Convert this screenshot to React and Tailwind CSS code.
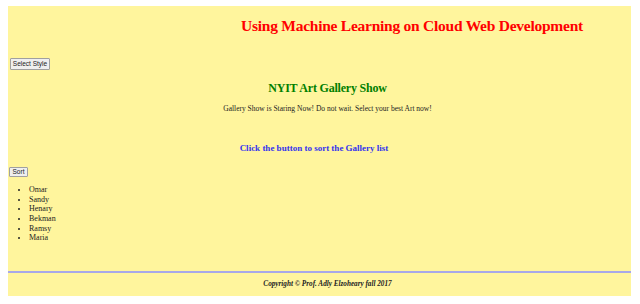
export default function App() {
  return (
    <div className="w-[640px] h-[304px] bg-white pt-[6px] pl-2 leading-none" style={{ fontFamily: '"Liberation Serif", "Times New Roman", serif' }}>
      <div className="w-[623px] h-[290px] bg-[#fff59d] flex flex-col">
        <h1 className="ml-[233px] mt-[11px] text-[15.5px] leading-[18px] tracking-[-0.25px] font-bold text-[#ff0000] whitespace-nowrap">
          Using Machine Learning on Cloud Web Development
        </h1>
        <div className="mt-[23px] ml-[2px] flex">
          <button className="h-[12px] w-[40px] text-[6.5px] leading-[10px] bg-[#efefef] border border-[#a0a0a0] rounded-[1px] text-[#222]" style={{ fontFamily: '"Liberation Sans", Arial, sans-serif' }}>
            Select Style
          </button>
        </div>
        <h2 className="mt-[11px] text-center pl-[16px] text-[12px] leading-[14px] tracking-[-0.2px] font-bold text-[#008000]">
          NYIT Art Gallery Show
        </h2>
        <p className="mt-[9px] text-center pl-[16px] text-[7.5px] leading-[9px] text-[#222]">
          Gallery Show is Staring Now! Do not wait. Select your best Art now!
        </p>
        <p className="mt-[30px] text-center pr-[11px] text-[9px] leading-[11px] font-bold text-[#3333ee]">
          Click the button to sort the Gallery list
        </p>
        <div className="mt-[13px] ml-[1px] flex">
          <button className="h-[10px] w-[19px] text-[6.5px] leading-[8px] bg-[#efefef] border border-[#a0a0a0] rounded-[1px] text-[#222]" style={{ fontFamily: '"Liberation Sans", Arial, sans-serif' }}>
            Sort
          </button>
        </div>
        <ul className="mt-[8px] pl-[21px] list-disc text-[8px] leading-[9.67px] text-[#222]">
          <li>Omar</li>
          <li>Sandy</li>
          <li>Henary</li>
          <li>Bekman</li>
          <li>Ramsy</li>
          <li>Maria</li>
        </ul>
        <div className="mt-auto h-[2px] bg-[#a8a8e8]" />
        <p className="mt-[7px] mb-[7px] text-center pl-[16px] text-[7.2px] leading-[9px] font-bold italic text-[#222]">
          Copyright © Prof. Adly Elzoheary fall 2017
        </p>
      </div>
    </div>
  );
}
